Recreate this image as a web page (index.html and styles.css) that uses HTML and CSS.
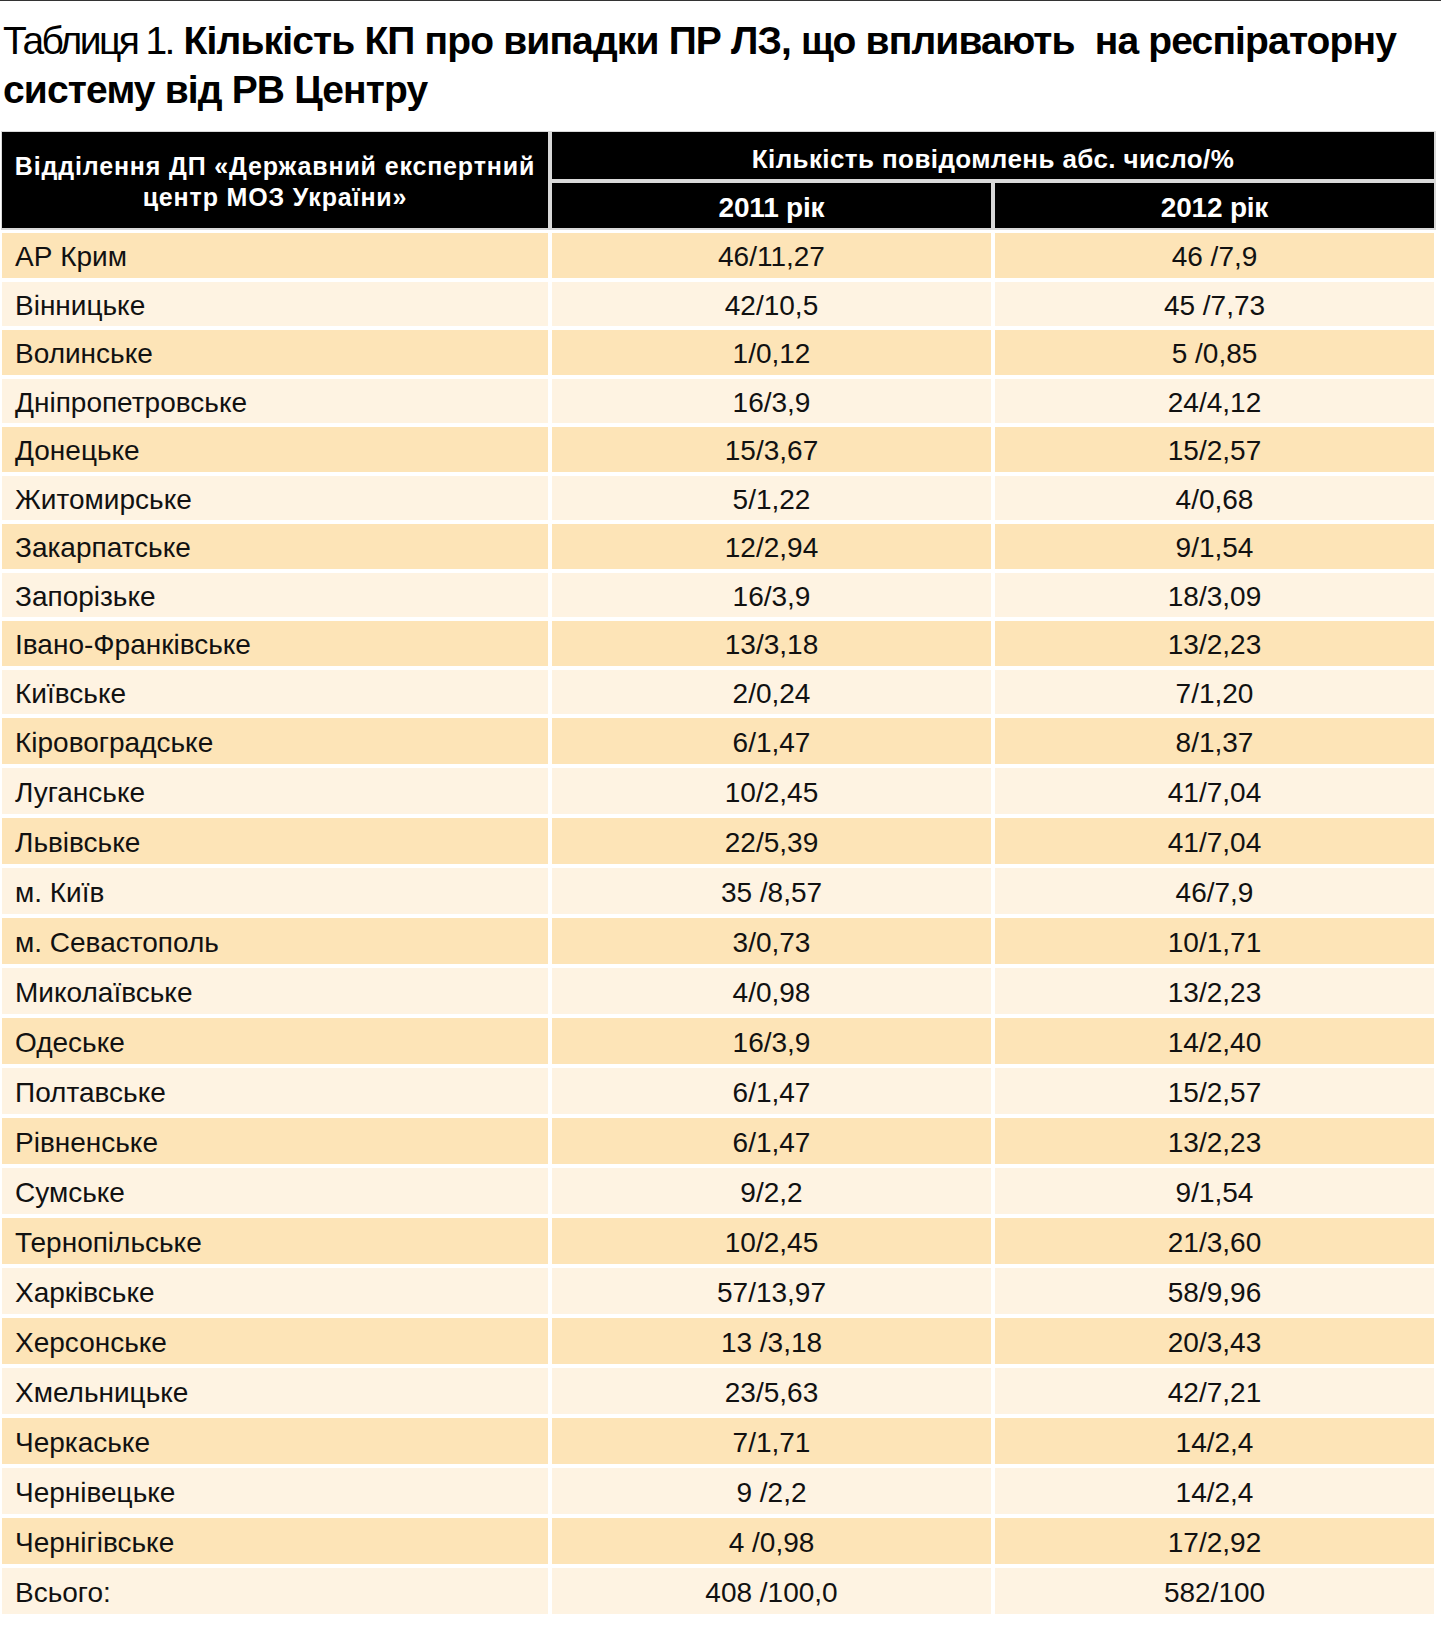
FILE: index.html
```html
<!DOCTYPE html>
<html lang="uk">
<head>
<meta charset="utf-8">
<title>Таблиця 1</title>
<link rel="stylesheet" href="styles.css">
</head>
<body>
<div class="page">
  <h1 class="title">
    <div class="tline"><span class="title-label">Таблиця 1.</span> <span class="title-main">Кількість КП про випадки ПР ЛЗ, що впливають&nbsp; на респіраторну</span></div>
    <div class="tline title-main">систему від РВ Центру</div>
  </h1>

  <div class="head">
    <div class="hcell hdept">Відділення ДП «Державний експертний<br>центр МОЗ України»</div>
    <div class="hcell hcount">Кількість повідомлень абс. число/%</div>
    <div class="hcell hyear">2011 рік</div>
    <div class="hcell hyear">2012 рік</div>
  </div>

  <div class="body">
    <div class="row dark"><div class="c name">АР Крим</div><div class="c">46/11,27</div><div class="c">46 /7,9</div></div>
    <div class="row light"><div class="c name">Вінницьке</div><div class="c">42/10,5</div><div class="c">45 /7,73</div></div>
    <div class="row dark"><div class="c name">Волинське</div><div class="c">1/0,12</div><div class="c">5 /0,85</div></div>
    <div class="row light"><div class="c name">Дніпропетровське</div><div class="c">16/3,9</div><div class="c">24/4,12</div></div>
    <div class="row dark"><div class="c name">Донецьке</div><div class="c">15/3,67</div><div class="c">15/2,57</div></div>
    <div class="row light"><div class="c name">Житомирське</div><div class="c">5/1,22</div><div class="c">4/0,68</div></div>
    <div class="row dark"><div class="c name">Закарпатське</div><div class="c">12/2,94</div><div class="c">9/1,54</div></div>
    <div class="row light"><div class="c name">Запорізьке</div><div class="c">16/3,9</div><div class="c">18/3,09</div></div>
    <div class="row dark"><div class="c name">Івано-Франківське</div><div class="c">13/3,18</div><div class="c">13/2,23</div></div>
    <div class="row light"><div class="c name">Київське</div><div class="c">2/0,24</div><div class="c">7/1,20</div></div>
    <div class="row dark tall"><div class="c name">Кіровоградське</div><div class="c">6/1,47</div><div class="c">8/1,37</div></div>
    <div class="row light tall"><div class="c name">Луганське</div><div class="c">10/2,45</div><div class="c">41/7,04</div></div>
    <div class="row dark tall"><div class="c name">Львівське</div><div class="c">22/5,39</div><div class="c">41/7,04</div></div>
    <div class="row light tall"><div class="c name">м. Київ</div><div class="c">35 /8,57</div><div class="c">46/7,9</div></div>
    <div class="row dark tall"><div class="c name">м. Севастополь</div><div class="c">3/0,73</div><div class="c">10/1,71</div></div>
    <div class="row light tall"><div class="c name">Миколаївське</div><div class="c">4/0,98</div><div class="c">13/2,23</div></div>
    <div class="row dark tall"><div class="c name">Одеське</div><div class="c">16/3,9</div><div class="c">14/2,40</div></div>
    <div class="row light tall"><div class="c name">Полтавське</div><div class="c">6/1,47</div><div class="c">15/2,57</div></div>
    <div class="row dark tall"><div class="c name">Рівненське</div><div class="c">6/1,47</div><div class="c">13/2,23</div></div>
    <div class="row light tall"><div class="c name">Сумське</div><div class="c">9/2,2</div><div class="c">9/1,54</div></div>
    <div class="row dark tall"><div class="c name">Тернопільське</div><div class="c">10/2,45</div><div class="c">21/3,60</div></div>
    <div class="row light tall"><div class="c name">Харківське</div><div class="c">57/13,97</div><div class="c">58/9,96</div></div>
    <div class="row dark tall"><div class="c name">Херсонське</div><div class="c">13 /3,18</div><div class="c">20/3,43</div></div>
    <div class="row light tall"><div class="c name">Хмельницьке</div><div class="c">23/5,63</div><div class="c">42/7,21</div></div>
    <div class="row dark tall"><div class="c name">Черкаське</div><div class="c">7/1,71</div><div class="c">14/2,4</div></div>
    <div class="row light tall"><div class="c name">Чернівецьке</div><div class="c">9 /2,2</div><div class="c">14/2,4</div></div>
    <div class="row dark tall"><div class="c name">Чернігівське</div><div class="c">4 /0,98</div><div class="c">17/2,92</div></div>
    <div class="row light tall"><div class="c name">Всього:</div><div class="c">408 /100,0</div><div class="c">582/100</div></div>
  </div>
</div>
</body>
</html>
```
FILE: styles.css
```css
html, body {
  margin: 0;
  padding: 0;
  background: #fff;
}
body {
  font-family: "Liberation Sans", Arial, sans-serif;
  color: #111;
}
.page {
  width: 1441px;
  border-top: 1px solid #333;
}
.title {
  margin: 0;
  padding: 15px 0 0 3px;
  height: 130px;
  box-sizing: border-box;
  font-size: 39px;
  line-height: 49px;
  font-weight: normal;
  color: #000;
}
.tline {
  white-space: nowrap;
}
.title-label {
  font-weight: 400;
  letter-spacing: -2.6px;
}
.title-main {
  font-weight: 700;
  letter-spacing: -0.85px;
}
.head {
  margin-left: 1px;
  width: 1435px;
  box-sizing: border-box;
  padding: 1px 2px 2px 1px;
  background: #d9d9d9;
  display: grid;
  grid-template-columns: 546px 439px 439px;
  grid-template-rows: 47px 45px;
  column-gap: 4px;
  row-gap: 4px;
}
.hcell {
  background: #000;
  color: #fff;
  font-weight: 700;
  display: flex;
  align-items: center;
  justify-content: center;
  text-align: center;
}
.hdept {
  grid-row: 1 / 3;
  font-size: 25px;
  line-height: 31px;
  letter-spacing: 0.85px;
  padding-top: 4px;
}
.hcount {
  grid-column: 2 / 4;
  font-size: 26px;
  letter-spacing: 0.4px;
  padding-top: 7px;
}
.hyear {
  font-size: 28px;
  letter-spacing: -0.2px;
  padding-top: 5px;
}
.body {
  margin-top: 3px;
  margin-left: 2px;
}
.row {
  display: grid;
  grid-template-columns: 546px 439px 439px;
  column-gap: 4px;
  height: 44.5px;
  margin-bottom: 4px;
}
.row.tall {
  height: 46px;
}
.row.dark .c {
  background: #fde4b7;
}
.row.light .c {
  background: #fef3e2;
}
.c {
  display: flex;
  align-items: center;
  justify-content: center;
  font-size: 28px;
  padding-top: 4px;
  box-sizing: border-box;
}
.c.name {
  justify-content: flex-start;
  padding-left: 13px;
}
```
